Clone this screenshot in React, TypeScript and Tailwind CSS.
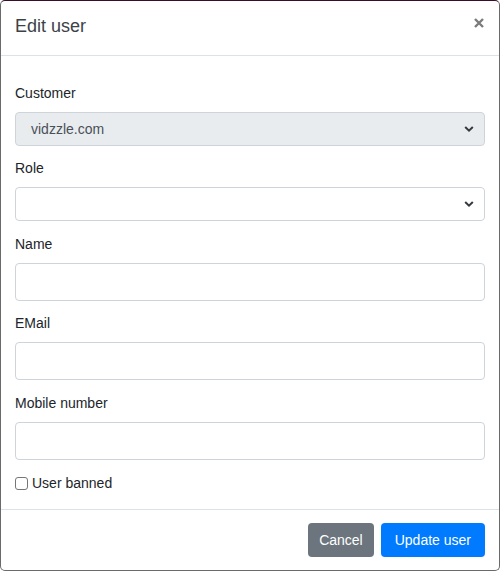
import React from "react";

function Chevron() {
  return (
    <svg width="10" height="7" viewBox="0 0 10 7" className="absolute right-[10px] top-1/2 -translate-y-1/2">
      <path d="M1.2 1.5 L5 5.2 L8.8 1.5" fill="none" stroke="#343a40" strokeWidth="2" />
    </svg>
  );
}

function Label({ children }: { children: React.ReactNode }) {
  return <div className="text-[14px] leading-[21px] text-[#212529] mb-[8px]">{children}</div>;
}

export default function App() {
  return (
    <div
      className="w-[500px] h-[572px] bg-white relative overflow-hidden"
      style={{ fontFamily: '"Liberation Sans", Arial, sans-serif' }}
    >
      <div className="absolute left-0 top-0 w-[500px] h-[571px] flex flex-col bg-white border border-[#6a6a6a] border-t-[#3b0d2c] rounded-[5px] overflow-hidden">
        <div className="h-[55px] shrink-0 flex items-center justify-between pl-[14px] pr-[15px] border-b border-[#dee2e6]">
          <div className="text-[18px] text-[#3d4248] leading-[27px] -mt-[3px]">Edit user</div>
          <svg width="10" height="10" viewBox="0 0 10 10" className="-mt-[10px]">
            <path d="M1 1 L9 9 M9 1 L1 9" stroke="#7b7b7b" strokeWidth="2.4" />
          </svg>
        </div>
        <div className="flex flex-col px-[14px] pt-[27px] pb-[15px]">
          <Label>Customer</Label>
          <div className="relative h-[34px] rounded-[4px] border border-[#ced4da] bg-[#e9ecef] flex items-center pl-[15px] text-[14px] text-[#495057]">
            vidzzle.com
            <Chevron />
          </div>
          <div className="h-[12px]" />
          <Label>Role</Label>
          <div className="relative h-[34px] rounded-[4px] border border-[#ced4da] bg-white">
            <Chevron />
          </div>
          <div className="h-[13px]" />
          <Label>Name</Label>
          <div className="h-[38px] rounded-[4px] border border-[#ced4da] bg-white" />
          <div className="h-[12px]" />
          <Label>EMail</Label>
          <div className="h-[38px] rounded-[4px] border border-[#ced4da] bg-white" />
          <div className="h-[13px]" />
          <Label>Mobile number</Label>
          <div className="h-[38px] rounded-[4px] border border-[#ced4da] bg-white" />
          <div className="h-[13px]" />
          <div className="flex items-center h-[21px] gap-[4px] text-[14px] text-[#212529]">
            <span className="inline-block w-[13px] h-[13px] rounded-[3px] border border-[#767676] bg-white" />
            User banned
          </div>
        </div>
        <div className="flex-1 border-t border-[#dee2e6] flex items-start justify-end gap-[7px] pt-[13px] pr-[14px]">
          <div className="h-[34px] px-[11px] rounded-[4px] bg-[#6c757d] text-white text-[14px] flex items-center">Cancel</div>
          <div className="h-[34px] px-[14px] rounded-[4px] bg-[#007bff] text-white text-[14px] flex items-center">Update user</div>
        </div>
      </div>
    </div>
  );
}
